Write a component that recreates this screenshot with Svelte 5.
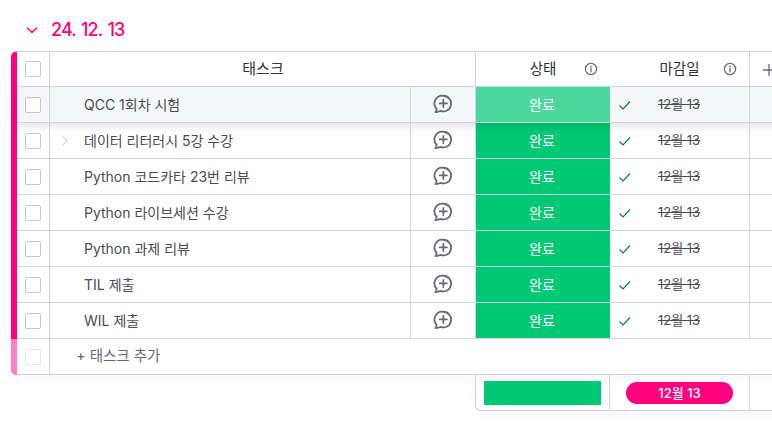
<script>
	const tasks = [
		{ name: 'QCC 1회차 시험', hover: true },
		{ name: '데이터 리터러시 5강 수강', sub: true },
		{ name: 'Python 코드카타 23번 리뷰' },
		{ name: 'Python 라이브세션 수강' },
		{ name: 'Python 과제 리뷰' },
		{ name: 'TIL 제출' },
		{ name: 'WIL 제출' }
	];
</script>

{#snippet info()}
	<svg class="info" width="14" height="14" viewBox="0 0 14 14" fill="none">
		<circle cx="7" cy="7" r="5.6" stroke="#676879" stroke-width="1.3" />
		<circle cx="7" cy="4.6" r="0.85" fill="#676879" />
		<path d="M7 6.4v3.4" stroke="#676879" stroke-width="1.3" stroke-linecap="round" />
	</svg>
{/snippet}

<div class="board">
	<div class="title">
		<svg width="14" height="14" viewBox="0 0 14 14" fill="none">
			<path d="M2.5 5l4.5 4.5L11.5 5" stroke="#ff007f" stroke-width="1.5" stroke-linecap="round" stroke-linejoin="round" />
		</svg>
		<h2>24. 12. 13</h2>
	</div>

	<div class="table">
		<div class="row head">
			<div class="cell check"><span class="box"></span></div>
			<div class="cell task-head">태스크</div>
			<div class="cell status-head">상태{@render info()}</div>
			<div class="cell date-head">마감일{@render info()}</div>
			<div class="cell add">
				<svg width="14" height="14" viewBox="0 0 14 14" fill="none">
					<path d="M7 1v12M1 7h12" stroke="#676879" stroke-width="1.3" />
				</svg>
			</div>
		</div>

		{#each tasks as t}
			<div class="row" class:hover={t.hover}>
				<div class="cell check"><span class="box"></span></div>
				<div class="cell task">
					{#if t.sub}
						<svg class="expand" width="8" height="12" viewBox="0 0 8 12" fill="none">
							<path d="M1.5 1.5L6 6l-4.5 4.5" stroke="#d5d8df" stroke-width="1.2" />
						</svg>
					{/if}
					{t.name}
				</div>
				<div class="cell chat">
					<svg width="22" height="22" viewBox="0 0 20 20" fill="none">
						<path d="M10.3 2.5a7.1 7.1 0 1 1-2.6 13.7c-1.3.9-3 1.3-4.6 1.2.8-.8 1.2-1.8 1.1-3A7.1 7.1 0 0 1 10.3 2.5z" stroke="#676879" stroke-width="1.6" stroke-linejoin="round" />
						<path d="M10.3 6.2v6.600M7 9.500h6.600" stroke="#676879" stroke-width="1.6" stroke-linecap="round" />
					</svg>
				</div>
				<div class="cell status">완료</div>
				<div class="cell date">
					<svg class="tick" width="14" height="12" viewBox="0 0 14 12" fill="none">
						<path d="M1.5 6.5L5 10l7-7.500" stroke="#037f4c" stroke-width="1.2" />
					</svg>
					<s>12월 13</s>
				</div>
				<div class="cell add"></div>
			</div>
		{/each}

		<div class="row new">
			<div class="cell check"><span class="box"></span></div>
			<div class="cell new-label">+ 태스크 추가</div>
		</div>
	</div>

	<div class="summary">
		<div class="sum-status"><span class="bar"></span></div>
		<div class="sum-date"><span class="pill">12월 13</span></div>
		<div class="sum-rest"></div>
	</div>
</div>

<style>
	:global(body) {
		margin: 0;
		background: #fff;
		overflow: hidden;
	}

	.board {
		width: 772px;
		height: 438px;
		overflow: hidden;
		box-sizing: border-box;
		padding-top: 19px;
		font-family: Inter, 'Noto Sans CJK KR', sans-serif;
		font-size: 14px;
		color: #4b4c55;
	}

	.title {
		display: flex;
		align-items: center;
		gap: 12px;
		height: 22px;
		margin-bottom: 10px;
		padding-left: 25px;
	}

	h2 {
		margin: 0;
		font-size: 18px;
		font-weight: 500;
		letter-spacing: -0.9px;
		word-spacing: 1.5px;
		line-height: 22px;
		color: #ff007f;
	}

	.table {
		width: 900px;
		margin-left: 11px;
		border-left: 6px solid #ff007f;
		border-top: 1px solid #d0d4e4;
		border-radius: 6px 0 0 6px;
		box-shadow: 0 4px 8px rgba(0, 0, 0, 0.04);
		box-sizing: border-box;
	}

	.row {
		display: grid;
		grid-template-columns: 33px 361px 65px 134px 140px 1fr;
		height: 36px;
		box-sizing: border-box;
		border-bottom: 1px solid #d0d4e4;
		background: #fff;
	}

	.row.head {
		height: 35px;
	}

	.row.hover {
		position: relative;
		background: #f5f6f8;
		box-shadow: 0 4px 8px rgba(0, 0, 0, 0.1);
	}

	.cell {
		display: flex;
		align-items: center;
		box-sizing: border-box;
		border-right: 1px solid #d0d4e4;
		min-width: 0;
	}

	.check {
		justify-content: center;
	}

	.box {
		width: 16px;
		height: 16px;
		box-sizing: border-box;
		border: 1px solid #c3c6d4;
		border-radius: 2px;
		background: #fff;
	}

	.task-head {
		grid-column: span 2;
		justify-content: center;
		padding-bottom: 4px;
		padding-left: 1px;
		font-size: 15px;
		color: #323338;
	}

	.status-head,
	.date-head {
		position: relative;
		justify-content: center;
		padding-bottom: 4px;
		font-size: 14.5px;
		color: #323338;
	}

	.status-head {
		border-right: none;
	}

	.info {
		position: absolute;
		right: 12px;
		top: 10px;
	}

	.add {
		border-right: none;
		padding-left: 12px;
		padding-top: 2px;
	}

	.task {
		position: relative;
		padding-left: 34px;
		padding-bottom: 2px;
		white-space: nowrap;
	}

	.expand {
		position: absolute;
		left: 11px;
		top: 12px;
	}

	.chat {
		justify-content: center;
		padding-bottom: 1px;
	}

	.status {
		justify-content: center;
		background: #00c875;
		color: #fff;
		border-right: none;
		padding-right: 2px;
		padding-bottom: 2px;
	}

	.hover .status {
		background: #4dd69e;
	}

	.date {
		position: relative;
		justify-content: center;
		padding-left: 1px;
		padding-bottom: 2px;
		font-size: 13px;
	}

	.date s {
		text-decoration-thickness: 1px;
		padding-right: 2px;
	}

	.tick {
		position: absolute;
		left: 8px;
		top: 12px;
	}

	.row.new {
		grid-template-columns: 33px 1fr;
		position: relative;
	}

	.row.new::before {
		content: '';
		position: absolute;
		left: -6px;
		top: 0;
		bottom: -1px;
		width: 6px;
		background: #ff80bf;
		border-bottom-left-radius: 6px;
	}

	.row.new .box {
		border-color: #e6e9ef;
	}

	.new-label {
		border-right: none;
		padding-left: 26px;
		padding-bottom: 4px;
		font-size: 14.5px;
		color: #676879;
	}

	.summary {
		display: grid;
		grid-template-columns: 134px 140px 1fr;
		width: 500px;
		height: 36px;
		margin-left: 475px;
		box-sizing: border-box;
		border-left: 1px solid #d0d4e4;
		border-bottom: 1px solid #d0d4e4;
		border-bottom-left-radius: 6px;
		box-shadow: 0 4px 8px rgba(0, 0, 0, 0.04);
	}

	.sum-status {
		display: flex;
		align-items: center;
		padding: 0 8px;
		border-right: 1px solid #d0d4e4;
		box-sizing: border-box;
	}

	.bar {
		flex: 1;
		height: 24px;
		background: #00c875;
	}

	.sum-date {
		display: flex;
		align-items: center;
		justify-content: center;
		border-right: 1px solid #d0d4e4;
		box-sizing: border-box;
	}

	.pill {
		width: 107px;
		height: 22px;
		border-radius: 11px;
		background: #ff007f;
		color: #fff;
		font-size: 13px;
		font-weight: 500;
		line-height: 22px;
		text-align: center;
	}
</style>
